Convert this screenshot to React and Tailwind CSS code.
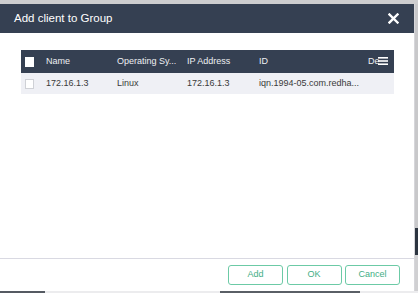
import React from "react";

function MenuIcon() {
  return (
    <svg width="10" height="8" viewBox="0 0 10 8">
      <rect x="0" y="0" width="10" height="1.6" fill="#ffffff" />
      <rect x="0" y="3.2" width="10" height="1.6" fill="#ffffff" />
      <rect x="0" y="6.4" width="10" height="1.6" fill="#ffffff" />
    </svg>
  );
}

function CloseIcon() {
  return (
    <svg width="11" height="11" viewBox="0 0 11 11">
      <path d="M1.5 1.5 L9.5 9.5 M9.5 1.5 L1.5 9.5" stroke="#ffffff" strokeWidth="2.4" strokeLinecap="square" />
    </svg>
  );
}

export default function App() {
  return (
    <div
      className="w-[418px] h-[293px] overflow-hidden bg-[#c6c6c8] flex flex-col"
      style={{ fontFamily: '"Liberation Sans", Arial, sans-serif' }}
    >
      <div className="h-[4px] shrink-0 bg-[#cdcdcf]" />
      <div className="flex shrink-0 h-[287px]">
        <div className="w-[415px] h-full bg-white flex flex-col border-r border-[#d6d6da]">
          {/* Header */}
          <div className="h-[29px] shrink-0 bg-[#354052] flex items-center justify-between pl-[14px] pr-[15px]">
            <span className="text-[11.5px] text-white leading-none">Add client to Group</span>
            <CloseIcon />
          </div>
          {/* Body */}
          <div className="flex-1 pt-[17px] pl-[21px]">
            <div className="w-[373px] relative">
              <div className="h-[23px] bg-[#354052] flex items-center text-[9px] text-[#eef0f3]">
                <div className="w-[21px] pl-[4px] flex items-center">
                  <div className="w-[9px] h-[10px] bg-white" />
                </div>
                <div className="w-[71px] pl-[4px]">Name</div>
                <div className="w-[70px] pl-[4px] whitespace-nowrap">Operating Sy...</div>
                <div className="w-[72px] pl-[4px]">IP Address</div>
                <div className="w-[109px] pl-[4px]">ID</div>
                <div className="w-[30px] pl-[4px] overflow-hidden whitespace-nowrap">De</div>
                <div className="absolute right-[6px] top-[7px]">
                  <MenuIcon />
                </div>
              </div>
              <div className="h-[21px] bg-[#eff0f5] flex items-center text-[9px] text-[#3a3a3a]">
                <div className="w-[21px] pl-[4px] flex items-center">
                  <div className="w-[9px] h-[10px] bg-white border border-[#cfd1d6]" />
                </div>
                <div className="w-[71px] pl-[4px]">172.16.1.3</div>
                <div className="w-[70px] pl-[4px]">Linux</div>
                <div className="w-[72px] pl-[4px]">172.16.1.3</div>
                <div className="w-[109px] pl-[4px] whitespace-nowrap">iqn.1994-05.com.redha...</div>
                <div className="w-[30px]" />
              </div>
            </div>
          </div>
          {/* Footer */}
          <div className="h-[33px] shrink-0 border-t border-[#d9d9e2] flex justify-end items-start pt-[6px] pr-[14px] gap-[3.5px]">
            {["Add", "OK", "Cancel"].map((t) => (
              <button
                key={t}
                className="w-[55px] h-[20px] border border-[#6ccaa6] rounded-[3px] bg-white text-[9px] text-[#3fae86] flex items-center justify-center"
              >
                {t}
              </button>
            ))}
          </div>
        </div>
        <div className="flex-1 flex flex-col">
          <div className="h-[224px] bg-[#c8c8ca]" />
          <div className="h-[27px] bg-[#2c3440]" />
          <div className="flex-1 bg-[#d0d0d2]" />
        </div>
      </div>
      <div className="flex-1 bg-[#ececee] flex items-center">
        <div className="ml-[0px] w-[45px] h-[2px] bg-[#555a62]" />
        <div className="ml-[175px] w-[140px] h-[2px] bg-[#5a5f66]" />
      </div>
    </div>
  );
}
